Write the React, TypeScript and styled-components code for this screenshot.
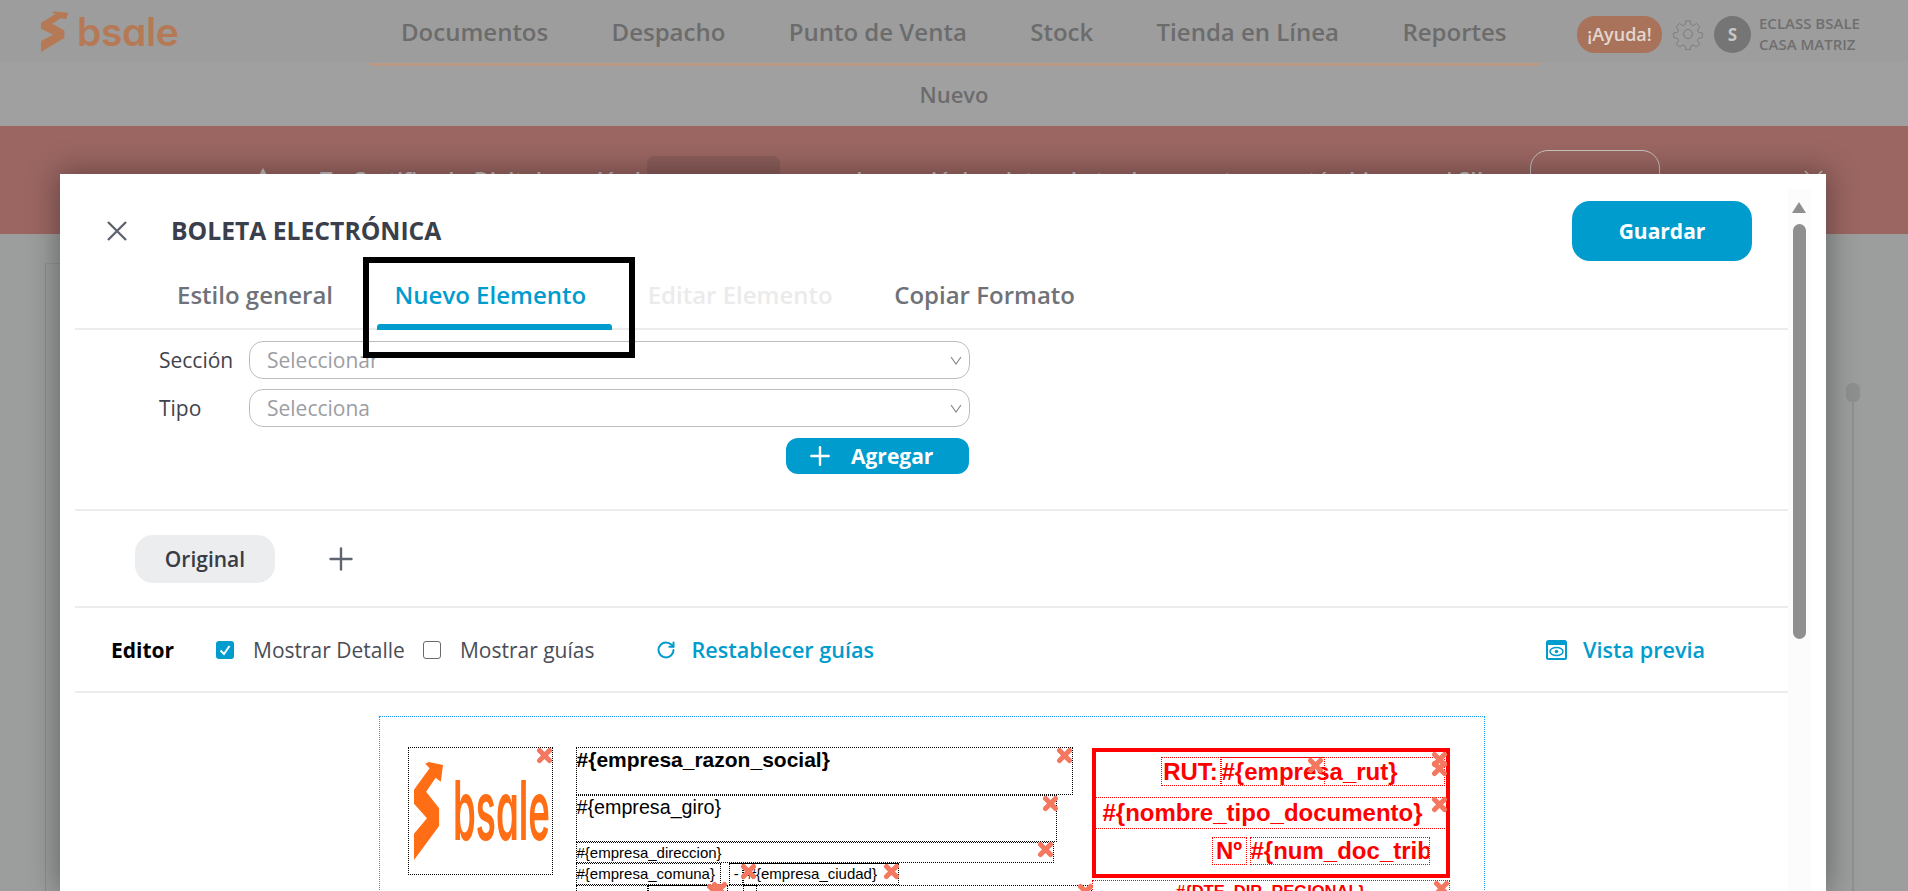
import React from "react";
import styled, { createGlobalStyle, css } from "styled-components";
import { Plus, RotateCw } from "lucide-react";

const Global = createGlobalStyle`
  html, body { margin: 0; padding: 0; height: 891px; overflow: hidden; background: #9c9e9d; }
  body { font-family: "Open Sans", "Noto Sans", sans-serif; }
  * { box-sizing: border-box; }
  svg { display: block; }
`;

const Page = styled.div`
  position: relative;
  height: 891px;
  overflow: hidden;
`;

const Header = styled.header`
  height: 62px;
  background: #9d9d9d;
  display: flex;
  align-items: flex-start;
  position: relative;
`;

const Brand = styled.div`
  width: 369px;
  padding: 11px 0 0 41px;
  display: flex;
  gap: 9px;
  flex: none;
`;

const BrandWord = styled.span`
  font-family: Inter, "Noto Sans", sans-serif;
  font-feature-settings: "cv11";
  font-size: 39px;
  line-height: 41px;
  font-weight: 600;
  letter-spacing: -0.4px;
  color: #b57a55;
`;

const Nav = styled.nav`
  width: 1170px;
  height: 66px;
  display: flex;
  border-bottom: 3px solid #ba9a84;
  flex: none;
`;

const NavItem = styled.span`
  padding: 0 31.7px;
  line-height: 64px;
  font-size: 24px;
  font-weight: 600;
  color: #6c6c6c;
  white-space: nowrap;
  &:first-child { padding-left: 32px; }
`;

const HeaderTools = styled.div`
  display: flex;
  align-items: center;
  padding: 13px 0 0 38px;
  flex: none;
`;

const HelpPill = styled.span`
  width: 85px;
  height: 37px;
  border-radius: 18px;
  background: #a8735a;
  color: #e3d6cf;
  font-size: 18px;
  font-weight: 600;
  line-height: 36px;
  text-align: center;
`;

const GearWrap = styled.span`
  width: 32px;
  height: 32px;
  margin: 0 10px;
  display: block;
`;

const Avatar = styled.span`
  width: 37px;
  height: 37px;
  border-radius: 50%;
  background: #757575;
  color: #c6c6c6;
  font-weight: 700;
  font-size: 17px;
  line-height: 37px;
  text-align: center;
  flex: none;
`;

const Account = styled.div`
  margin-left: 8px;
  font-size: 15px;
  line-height: 21px;
  font-weight: 600;
  color: #6f6f6f;
  white-space: nowrap;
`;

const SubNav = styled.div`
  height: 64px;
  background: #a0a0a0;
  text-align: center;
  font-size: 22px;
  font-weight: 600;
  color: #6c6c6c;
  padding-top: 7px;
  line-height: 50px;
`;

const Banner = styled.div`
  height: 108px;
  background: #9b6662;
  position: relative;
  display: flex;
  align-items: flex-start;
  padding: 24px 0 0 253px;
  color: #c9c3c2;
`;

const BannerTriangle = styled.span`
  width: 0;
  height: 0;
  margin-top: 18px;
  border-left: 10px solid transparent;
  border-right: 10px solid transparent;
  border-bottom: 18px solid #c6c0bf;
  flex: none;
`;

const BannerText = styled.span`
  margin: 4px 0 0 47px;
  font-size: 22px;
  font-weight: 600;
  line-height: 50px;
  white-space: nowrap;
  width: 1210px;
  flex: none;
`;

const BannerDate = styled.span`
  display: inline-block;
  padding: 0 13px;
  font-size: 20px;
  background: #8b5d5a;
  border-radius: 8px;
`;

const BannerButton = styled.span`
  width: 130px;
  height: 60px;
  border: 1px solid #c7c2c1;
  border-radius: 18px;
  color: #d0cccb;
  font-size: 18px;
  line-height: 60px;
  text-align: center;
  flex: none;
`;

const BannerClose = styled.span`
  width: 19px;
  height: 19px;
  margin: 20px 0 0 144px;
  color: #c6c0bf;
  flex: none;
  display: block;
`;

const PageBody = styled.div`
  position: relative;
  height: 657px;
  background: #9c9e9d;
  padding: 29px 0 0 45px;
`;

const BackCard = styled.div`
  height: 700px;
  width: 1770px;
  border-top: 1px solid #929493;
  border-left: 1px solid #8c8e8d;
`;

const SliderHandle = styled.div`
  position: absolute;
  left: 1846px;
  top: 149px;
  width: 14px;
  height: 19px;
  border-radius: 6px;
  background: #8e908f;
`;

const SliderTrack = styled.div`
  position: absolute;
  left: 1852px;
  top: 168px;
  width: 2px;
  bottom: 0;
  background: #8f9190;
`;

const Modal = styled.section`
  position: absolute;
  left: 60px;
  top: 174px;
  width: 1766px;
  height: 717px;
  background: #fff;
  box-shadow: 0 0 28px 2px rgba(0, 0, 0, 0.36);
  display: flex;
  padding: 0 15px;
  overflow: hidden;
`;

const Main = styled.div`
  width: 1713px;
  flex: none;
  position: relative;
`;

const ScrollColumn = styled.div`
  width: 23px;
  margin-top: 15px;
  background: #fcfcfc;
  flex: none;
  padding: 13px 0 0 5px;
`;

const ScrollArrow = styled.div`
  width: 0;
  height: 0;
  margin: 0 0 11px -1px;
  border-left: 7.5px solid transparent;
  border-right: 7.5px solid transparent;
  border-bottom: 11px solid #8f8f8f;
`;

const ScrollThumb = styled.div`
  width: 13px;
  height: 415px;
  border-radius: 7px;
  background: #8f8f8f;
`;

const TitleBar = styled.div`
  height: 87px;
  padding: 27px 36px 0 32px;
  display: flex;
  align-items: flex-start;
`;

const CloseButton = styled.span`
  width: 20px;
  height: 20px;
  margin-top: 20px;
  flex: none;
  color: #5e6570;
  display: block;
`;

const Title = styled.h1`
  margin: 0 0 0 44px;
  font-size: 24.7px;
  line-height: 60px;
  font-weight: 700;
  color: #3a3f4b;
  letter-spacing: 0;
  flex: 1;
`;

const SaveButton = styled.button`
  width: 180px;
  height: 60px;
  border: 0;
  border-radius: 18px;
  background: #009ccd;
  color: #fff;
  font: 700 21px "Open Sans", sans-serif;
`;

const Tabs = styled.div`
  height: 69px;
  display: flex;
  gap: 25.5px;
  padding-left: 84px;
  border-bottom: 2px solid #ececec;
`;

const Tab = styled.div<{ $state?: "active" | "disabled" }>`
  position: relative;
  padding: 19px 18px 0;
  font-size: 24px;
  line-height: 30px;
  font-weight: 600;
  white-space: nowrap;
  color: ${(p) => (p.$state === "active" ? "#009ccd" : p.$state === "disabled" ? "#ebebeb" : "#6f7278")};
  ${(p) =>
    p.$state === "active" &&
    css`
      &::after {
        content: "";
        position: absolute;
        left: 0;
        right: -8px;
        bottom: -2px;
        height: 6px;
        border-radius: 3px 3px 0 0;
        background: #009ccd;
      }
    `}
`;

const Annotation = styled.div`
  position: absolute;
  left: 288px;
  top: 83px;
  width: 272px;
  height: 101px;
  border: 6px solid #000;
  pointer-events: none;
`;

const FormSection = styled.div`
  height: 181px;
  padding: 11px 0 0 84px;
  border-bottom: 2px solid #ececec;
`;

const FormRow = styled.div`
  display: flex;
  align-items: center;
  margin-bottom: 10px;
`;

const FormLabel = styled.label`
  width: 90px;
  font-size: 21px;
  color: #3f434d;
  flex: none;
`;

const SelectBox = styled.div`
  width: 721px;
  height: 38px;
  border: 1px solid #bcbcc0;
  border-radius: 14px;
  padding: 0 7px 0 17px;
  font-size: 21px;
  line-height: 36px;
  color: #9c9ea2;
  display: flex;
  justify-content: space-between;
  align-items: center;
`;

const AddButton = styled.button`
  display: flex;
  align-items: center;
  gap: 20px;
  margin: 11px 0 0 627px;
  width: 183px;
  height: 36px;
  border: 0;
  border-radius: 12px;
  padding: 0 0 0 23px;
  background: #009ccd;
  color: #fff;
  font: 700 21px "Open Sans", sans-serif;
`;

const VariantRow = styled.div`
  height: 97px;
  padding: 24px 0 0 60px;
  display: flex;
  align-items: flex-start;
  border-bottom: 2px solid #ececec;
`;

const Chip = styled.span`
  width: 140px;
  height: 48px;
  border-radius: 18px;
  background: #ecedef;
  color: #383c46;
  font-size: 21px;
  font-weight: 600;
  line-height: 48px;
  text-align: center;
`;

const AddVariant = styled.span`
  margin: 6px 0 0 48px;
  color: #5e6570;
  display: block;
  height: 36px;
`;

const EditorRow = styled.div`
  height: 85px;
  padding: 0 83px 0 36px;
  display: flex;
  align-items: center;
  border-bottom: 2px solid #ececec;
  font-size: 21px;
  color: #4a4d55;
`;

const EditorLabel = styled.strong`
  width: 105px;
  font-weight: 700;
  color: #000;
  font-size: 21px;
`;

const CheckBox = styled.span<{ $on?: boolean }>`
  width: 18px;
  height: 18px;
  border-radius: 3px;
  flex: none;
  display: block;
  background: ${(p) => (p.$on ? "#009ccd" : "#fff")};
  border: ${(p) => (p.$on ? "0" : "1.5px solid #6a6a6a")};
  color: #fff;
`;

const CheckLabel = styled.span`
  margin: 0 18px 0 19px;
  white-space: nowrap;
`;

const LinkText = styled.span`
  color: #009ccd;
  font-weight: 600;
  font-size: 21.6px;
  white-space: nowrap;
`;

const ResetLink = styled.div`
  display: flex;
  align-items: center;
  gap: 15px;
  margin-left: 44px;
  color: #009ccd;
`;

const PreviewLink = styled.div`
  display: flex;
  align-items: center;
  gap: 16px;
  margin-left: auto;
  color: #009ccd;
`;

const CanvasArea = styled.div`
  padding-top: 23px;
  display: flex;
  justify-content: center;
`;

const Sheet = styled.div`
  position: relative;
  width: 1106px;
  height: 500px;
  border: 1px dotted #1e9bf0;
  font-family: "Liberation Sans", Arial, sans-serif;
  color: #000;
`;

type BoxProps = {
  $x: number;
  $y: number;
  $w: number;
  $h: number;
  $red?: boolean;
  $size?: number;
  $bold?: boolean;
  $align?: string;
  $topSolid?: boolean;
  $clip?: boolean;
  $line?: number;
  $plain?: boolean;
  $pad?: number;
};

const Field = styled.div<BoxProps>`
  position: absolute;
  left: ${(p) => p.$x - 380}px;
  top: ${(p) => p.$y - 717}px;
  width: ${(p) => p.$w}px;
  height: ${(p) => p.$h}px;
  padding-left: ${(p) => p.$pad ?? 0}px;
  border: ${(p) => (p.$plain ? "0" : `1px dotted ${p.$red ? "#f00" : "#000"}`)};
  ${(p) => p.$topSolid && `border-top: 1.5px solid ${p.$red ? "#f00" : "#000"};`}
  color: ${(p) => (p.$red ? "#f00" : "#000")};
  font-size: ${(p) => p.$size ?? 15}px;
  font-weight: ${(p) => (p.$bold ? 700 : 400)};
  text-align: ${(p) => p.$align ?? "left"};
  line-height: ${(p) => p.$line ?? p.$h - 2}px;
  white-space: nowrap;
  overflow: ${(p) => (p.$clip ? "hidden" : "visible")};
`;

const SealFrame = styled.div`
  position: absolute;
  left: ${1092 - 380}px;
  top: ${748 - 717}px;
  width: 358px;
  height: 130px;
  border: 4px solid #f00;
`;

const DeleteMark = styled.svg<{ $x: number; $y: number }>`
  position: absolute;
  left: ${(p) => p.$x - 380 - 8}px;
  top: ${(p) => p.$y - 717 - 8}px;
  width: 17px;
  height: 17px;
  z-index: 3;
`;

const SheetLogo = styled.div`
  position: absolute;
  left: ${414 - 380}px;
  top: ${761 - 717}px;
  display: flex;
  gap: 10px;
  align-items: flex-start;
`;

const SheetWord = styled.span`
  font-family: Inter, "Noto Sans", sans-serif;
  font-feature-settings: "cv11";
  font-size: 62px;
  line-height: 62px;
  font-weight: 600;
  color: #ff6d15;
  display: block;
  width: 93px;
  margin-top: 9px;
  transform-origin: 0 0;
  transform: scale(0.59, 1.33);
`;

const BrandMark = ({ w, h, color }: { w: number; h: number; color: string }) => (
  <svg width={w} height={h} viewBox="0 0 67 297" preserveAspectRatio="none" aria-hidden="true" style={{ flex: "none" }}>
    <path
      fill={color}
      d="M34 3 L67 12 L62 62 L50 50 L28 92 L58 142 L58 195 L0 297 L0 218 L30 172 L0 128 L0 86 L36 22 L26 8 Z"
    />
  </svg>
);

const Gear = () => (
  <svg viewBox="0 0 32 32" width="32" height="32" fill="none" stroke="#7b7b7b" strokeWidth="1" aria-hidden="true">
    <circle cx="16" cy="16" r="4.5" />
    <path d="M13.5 1.5h5l.8 4.2 2.6 1.1 3.6-2.4 3.5 3.5-2.4 3.6 1.1 2.6 4.2.8v5l-4.2.8-1.1 2.6 2.4 3.6-3.5 3.5-3.6-2.4-2.6 1.1-.8 4.2h-5l-.8-4.2-2.6-1.1-3.6 2.4-3.5-3.5 2.4-3.6-1.1-2.6-4.2-.8v-5l4.2-.8 1.1-2.6-2.4-3.6 3.5-3.5 3.6 2.4 2.6-1.1z" transform="translate(1.6 1.6) scale(0.9)" />
  </svg>
);

const Chevron = () => (
  <svg width="12" height="12" viewBox="0 0 12 12" fill="none" stroke="#8a8a8a" strokeWidth="1.2" aria-hidden="true">
    <path d="M1 3 L6 10 L11 3" />
  </svg>
);

const marks: [number, number][] = [
  [544, 755], [1064, 755], [1050, 803], [1045, 849], [714, 891], [719, 889],
  [748, 871], [891, 871], [1085, 891], [1315, 765], [1439, 759], [1439, 768],
  [1439, 804], [1441, 888],
];

const App = () => (
  <Page>
    <Global />
    <Header>
      <Brand>
        <BrandMark w={27} h={41} color="#b57a55" />
        <BrandWord>bsale</BrandWord>
      </Brand>
      <Nav>
        {["Documentos", "Despacho", "Punto de Venta", "Stock", "Tienda en Línea", "Reportes"].map((t) => (
          <NavItem key={t}>{t}</NavItem>
        ))}
      </Nav>
      <HeaderTools>
        <HelpPill>¡Ayuda!</HelpPill>
        <GearWrap><Gear /></GearWrap>
        <Avatar>S</Avatar>
        <Account>
          ECLASS BSALE
          <br />
          CASA MATRIZ
        </Account>
      </HeaderTools>
    </Header>
    <SubNav>Nuevo</SubNav>
    <Banner>
      <BannerTriangle />
      <BannerText>
        Tu Certificado Digital venció el <BannerDate>14/11/2023</BannerDate> , cuando venció, los datos de tu documento no están bien en el SII
      </BannerText>
      <BannerButton>Renovar</BannerButton>
      <BannerClose>
        <svg width="19" height="19" viewBox="0 0 19 19" stroke="currentColor" strokeWidth="1.6" aria-hidden="true">
          <path d="M1 1 L18 18 M18 1 L1 18" />
        </svg>
      </BannerClose>
    </Banner>
    <PageBody>
      <BackCard />
      <SliderHandle />
      <SliderTrack />
    </PageBody>

    <Modal>
      <Main>
        <TitleBar>
          <CloseButton>
            <svg width="20" height="20" viewBox="0 0 20 20" stroke="currentColor" strokeWidth="2.4" aria-hidden="true">
              <path d="M1 1 L19 19 M19 1 L1 19" />
            </svg>
          </CloseButton>
          <Title>BOLETA ELECTRÓNICA</Title>
          <SaveButton>Guardar</SaveButton>
        </TitleBar>
        <Tabs>
          <Tab>Estilo general</Tab>
          <Tab $state="active">Nuevo Elemento</Tab>
          <Tab $state="disabled">Editar Elemento</Tab>
          <Tab>Copiar Formato</Tab>
        </Tabs>
        <FormSection>
          <FormRow>
            <FormLabel>Sección</FormLabel>
            <SelectBox>
              Seleccionar
              <Chevron />
            </SelectBox>
          </FormRow>
          <FormRow>
            <FormLabel>Tipo</FormLabel>
            <SelectBox>
              Selecciona
              <Chevron />
            </SelectBox>
          </FormRow>
          <AddButton>
            <Plus size={30} strokeWidth={1.9} style={{ margin: "0 -4px" }} />
            Agregar
          </AddButton>
        </FormSection>
        <VariantRow>
          <Chip>Original</Chip>
          <AddVariant><Plus size={36} strokeWidth={1.6} /></AddVariant>
        </VariantRow>
        <EditorRow>
          <EditorLabel>Editor</EditorLabel>
          <CheckBox $on>
            <svg width="18" height="18" viewBox="0 0 18 18" fill="none" stroke="currentColor" strokeWidth="2" aria-hidden="true"><path d="M4.5 9.5 L8 13 L13.5 5" /></svg>
          </CheckBox>
          <CheckLabel>Mostrar Detalle</CheckLabel>
          <CheckBox />
          <CheckLabel>Mostrar guías</CheckLabel>
          <ResetLink>
            <RotateCw size={20} strokeWidth={2.4} />
            <LinkText>Restablecer guías</LinkText>
          </ResetLink>
          <PreviewLink>
            <svg width="21" height="20" viewBox="0 0 21 20" aria-hidden="true">
              <rect x="0" y="0" width="21" height="20" rx="2.5" fill="currentColor" />
              <rect x="2" y="5" width="17" height="13" fill="#fff" />
              <ellipse cx="10.5" cy="11.5" rx="6.5" ry="4" fill="none" stroke="currentColor" strokeWidth="1.5" />
              <circle cx="10.5" cy="11.5" r="1.8" fill="currentColor" />
            </svg>
            <LinkText>Vista previa</LinkText>
          </PreviewLink>
        </EditorRow>
        <CanvasArea>
          <Sheet>
            <Field $x={408} $y={747} $w={145} $h={128} />
            <SheetLogo>
              <BrandMark w={29} h={99} color="#ff6d15" />
              <SheetWord>bsale</SheetWord>
            </SheetLogo>
            <Field $x={576} $y={747} $w={497} $h={48} $size={21} $bold $line={24}>#{"{"}empresa_razon_social{"}"}</Field>
            <Field $x={576} $y={795} $w={481} $h={47} $size={19.7} $line={22}>#{"{"}empresa_giro{"}"}</Field>
            <Field $x={576} $y={842} $w={478} $h={21}>#{"{"}empresa_direccion{"}"}</Field>
            <Field $x={576} $y={863} $w={145} $h={22}>#{"{"}empresa_comuna{"}"}</Field>
            <Field $x={729} $y={863} $w={14} $h={22} $topSolid>&nbsp;-</Field>
            <Field $x={743} $y={863} $w={156} $h={22} $topSolid>&nbsp;#{"{"}empresa_ciudad{"}"}</Field>
            <Field $x={576} $y={885} $w={516} $h={22} $line={24} />
            <Field $x={576} $y={885} $w={72} $h={22} $line={24}>Sucursal:</Field>
            <Field $x={648} $y={885} $w={80} $h={22} $line={24} $topSolid $clip>&nbsp;#{"{"}empresa_sucursal{"}"}</Field>
            <Field $x={743} $y={885} $w={14} $h={22} $line={24}>di</Field>
            <Field $x={759} $y={885} $w={100} $h={22} $line={24} $plain>sucursal{"}"}</Field>

            <SealFrame />
            <Field $x={1161} $y={757} $w={60} $h={29} $red $size={24} $bold $align="center">RUT:</Field>
            <Field $x={1221} $y={757} $w={224} $h={29} $red $size={24} $bold>#{"{"}empresa_rut{"}"}</Field>
            <Field $x={1221} $y={757} $w={104} $h={29} $red $topSolid />
            <Field $x={1095} $y={797} $w={352} $h={32} $red $size={24} $bold $pad={7}>#{"{"}nombre_tipo_documento{"}"}</Field>
            <Field $x={1212} $y={837} $w={35} $h={28} $red $size={24} $bold $align="center">Nº</Field>
            <Field $x={1250} $y={837} $w={180} $h={28} $red $size={24} $bold $clip>#{"{"}num_doc_tributario{"}"}</Field>
            <Field $x={1092} $y={880} $w={358} $h={22} $red $size={16.5} $bold $align="center" $line={20}>#{"{"}DTE_DIR_REGIONAL{"}"}</Field>

            {marks.map(([x, y]) => (
              <DeleteMark key={`${x}-${y}`} $x={x} $y={y} viewBox="0 0 17 17" aria-hidden="true">
                <path d="M3.5 3.5 L13.5 13.5 M13.5 3.5 L3.5 13.5" stroke="#f4775f" strokeWidth="5" strokeLinecap="round" />
              </DeleteMark>
            ))}
          </Sheet>
        </CanvasArea>
        <Annotation />
      </Main>
      <ScrollColumn>
        <ScrollArrow />
        <ScrollThumb />
      </ScrollColumn>
    </Modal>
  </Page>
);

export default App;
